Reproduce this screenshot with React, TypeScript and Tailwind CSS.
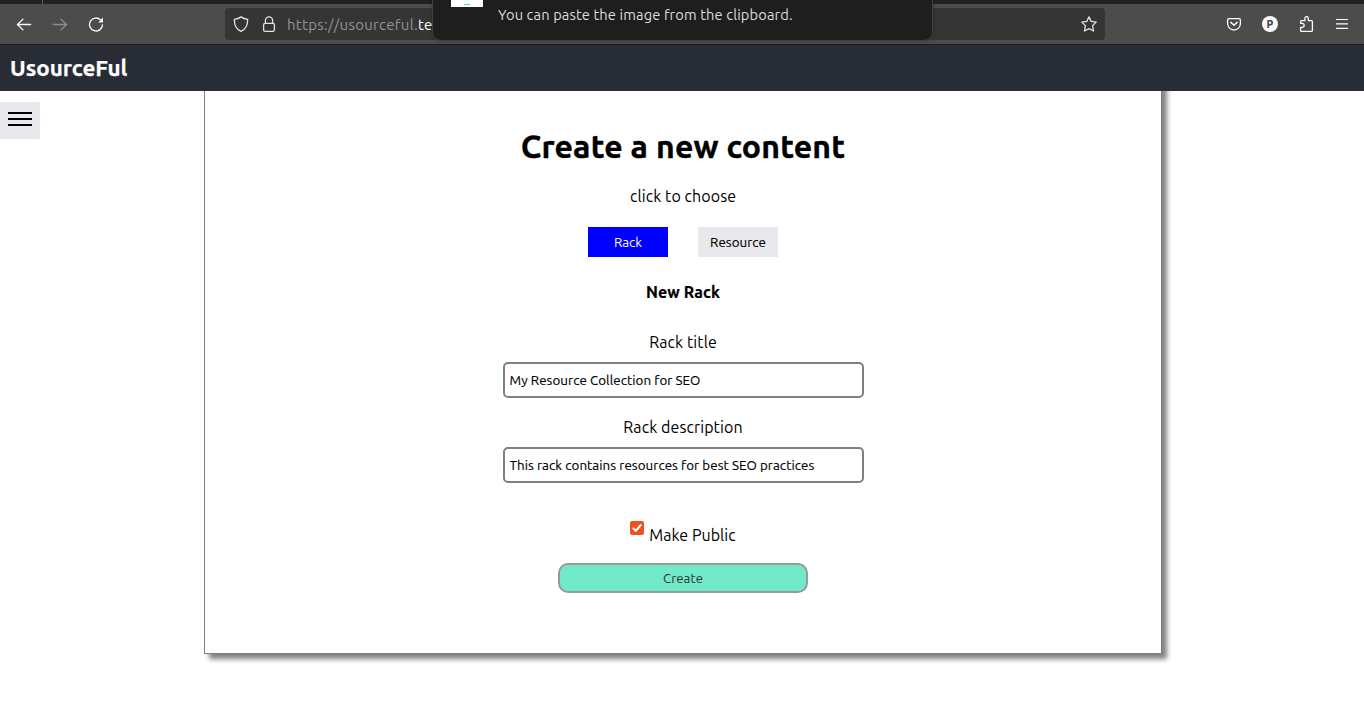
import { useState } from "react";

function BackIcon() {
  return (
    <svg width="16" height="16" viewBox="0 0 16 16" fill="none" stroke="currentColor" strokeWidth="1.3" strokeLinecap="round" strokeLinejoin="round">
      <path d="M14.6 8.5H1.6M7 3.1L1.4 8.5L7 13.9" />
    </svg>
  );
}

function ForwardIcon() {
  return (
    <svg width="16" height="16" viewBox="0 0 16 16" fill="none" stroke="currentColor" strokeWidth="1.3" strokeLinecap="round" strokeLinejoin="round">
      <path d="M1.4 8.5H14.4M9 3.1L14.6 8.5L9 13.9" />
    </svg>
  );
}

function ReloadIcon() {
  return (
    <svg width="16" height="16" viewBox="0 0 16 16" fill="none" stroke="currentColor" strokeWidth="1.3" strokeLinecap="round">
      <path d="M12.6 3.9A6.5 6.5 0 1 0 14.5 8.9" />
      <path d="M15 1.6V6.4H10.2Z" fill="currentColor" stroke="none" />
    </svg>
  );
}

function ShieldIcon() {
  return (
    <svg width="16" height="16" viewBox="0 0 16 16" fill="none" stroke="currentColor" strokeWidth="1.3" strokeLinejoin="round">
      <path d="M8 0.9C10 2.3 12 3 14.6 3.4C14.9 9 12.6 13.2 8 15.3C3.4 13.2 1.1 9 1.4 3.4C4 3 6 2.3 8 0.9Z" />
    </svg>
  );
}

function LockIcon() {
  return (
    <svg width="16" height="16" viewBox="0 0 16 16" fill="none" stroke="currentColor" strokeWidth="1.3">
      <rect x="2.6" y="7.3" width="10.8" height="8" rx="1.6" />
      <path d="M4.4 7.3V4.4A3.6 3.6 0 0 1 11.6 4.4V7.3" />
    </svg>
  );
}

function StarIcon() {
  return (
    <svg width="16" height="16" viewBox="0 0 16 16" fill="none" stroke="currentColor" strokeWidth="1.3" strokeLinejoin="round">
      <path d="M8 0.9L10.2 5.4L15.2 6.1L11.6 9.6L12.5 15L8 12.6L3.5 15L4.4 9.6L0.8 6.1L5.8 5.4Z" />
    </svg>
  );
}

function PocketIcon() {
  return (
    <svg width="16" height="16" viewBox="0 0 16 16" fill="none" stroke="currentColor" strokeWidth="1.3" strokeLinecap="round" strokeLinejoin="round">
      <path d="M3 2.7H13A1.5 1.5 0 0 1 14.4 4.2V7.6A6.4 6.4 0 0 1 1.6 7.6V4.2A1.5 1.5 0 0 1 3 2.7Z" />
      <path d="M4.9 6.4L8 9.2L11.1 6.4" strokeWidth="1.5" />
    </svg>
  );
}

function PuzzleIcon() {
  return (
    <svg width="16" height="16" viewBox="0 0 16 16" fill="none" stroke="currentColor" strokeWidth="1.3" strokeLinejoin="round">
      <path d="M2.6 7.3V5.6Q2.6 4.7 3.5 4.7H6.9V2.3A1.7 1.7 0 0 1 10.3 2.3V4.7H13.4Q14.4 4.7 14.4 5.6V14.4Q14.4 15.3 13.4 15.3H3.5Q2.6 15.3 2.6 14.4V11.4H4.1A2 2 0 0 0 4.1 7.3Z" />
    </svg>
  );
}

function ToolbarMenuIcon() {
  return (
    <svg width="14" height="16" viewBox="0 0 14 16" fill="none" stroke="currentColor" strokeWidth="1.2">
      <path d="M1 3.5H13M1 7.9H13M1 12.3H13" />
    </svg>
  );
}

function BrowserToolbar() {
  return (
    <div className="relative h-[45px] bg-[#4c4c4c]">
      <div className="h-1 bg-[#222222] pl-[42px]">
        <div className="h-1 w-px bg-[#5a5a5a]" />
      </div>
      <div className="flex h-10 items-center text-[#fbfbfe]">
        <div className="flex w-[225px] gap-5 pl-4">
          <BackIcon />
          <span className="text-[#8d8d8d]">
            <ForwardIcon />
          </span>
          <ReloadIcon />
        </div>
        <div className="flex h-8 w-[880px] items-center rounded bg-[#353535] pr-2 pl-2 text-[#e3e3e5]">
          <ShieldIcon />
          <span className="ml-3">
            <LockIcon />
          </span>
          <span className="ml-[10px] flex-1 pt-px text-[15px] leading-5 tracking-[0.28px] whitespace-nowrap text-[#939395]">
            https://usourceful.<span className="text-[#fbfbfe]">te</span>
          </span>
          <StarIcon />
        </div>
        <div className="flex flex-1 items-center justify-end gap-5 pr-[15px]">
          <PocketIcon />
          <span className="flex size-4 items-center justify-center rounded-full bg-[#fbfbfe] font-['Inter',sans-serif] text-[10px] leading-none font-extrabold text-[#4c4c4c]">
            P
          </span>
          <span className="mr-px">
            <PuzzleIcon />
          </span>
          <ToolbarMenuIcon />
        </div>
      </div>
      <div className="h-px bg-[#1b1b1c]" />
      <div className="absolute top-[-10px] left-[432px] h-[51px] w-[501px] rounded-[9px] border border-[#3f3f3f] bg-[#1e1e1e] shadow-[0_0_4px_rgba(0,0,0,0.25)]">
        <div className="flex items-start">
          <div className="ml-[18px] flex h-4 w-8 items-end justify-center bg-white pb-[2px]">
            <div className="h-px w-1.5 bg-[#3fdcb4]" />
          </div>
          <p className="mt-[14px] ml-[15px] text-[14.667px] leading-5 tracking-[0.12px] whitespace-nowrap text-[#dcdcdc]">
            You can paste the image from the clipboard.
          </p>
        </div>
      </div>
    </div>
  );
}

function TextField({ label, initial }: { label: string; initial: string }) {
  const [value, setValue] = useState(initial);
  return (
    <label className="flex flex-col items-center">
      <span className="text-base leading-5 tracking-[0.09px]">{label}</span>
      <input
        className="mt-2.5 h-9 w-[361px] rounded-[5px] border-2 border-[#808080] bg-white px-[5px] text-[13.333px] tracking-[0.08px] outline-none [-webkit-text-stroke:0.15px_black]"
        value={value}
        onChange={(e) => setValue(e.target.value)}
      />
    </label>
  );
}

export default function App() {
  const [isPublic, setPublic] = useState(true);
  return (
    <div className="h-[701px] overflow-hidden bg-white font-['Ubuntu','Noto_Sans',sans-serif] text-black">
      <BrowserToolbar />
      <header className="relative z-10 flex h-[46px] items-center bg-[#282c34] pl-[10px] text-[22.4px] font-bold text-white [-webkit-text-stroke:0.25px_white]">
        UsourceFul
      </header>
      <div className="flex items-start">
        <div className="w-[204px] pt-[11px]">
          <button className="flex h-[37px] w-10 flex-col items-center gap-1 bg-[#e9e9ed] pt-[10px]">
            <span className="h-0.5 w-6 bg-black" />
            <span className="h-0.5 w-6 bg-black" />
            <span className="h-0.5 w-6 bg-black" />
          </button>
        </div>
        <main className="-mt-5 flex h-[583px] w-[958px] flex-col items-center border border-[#808080] bg-white pt-[54px] shadow-[5px_5px_5px_gray]">
          <h1 className="text-[32px] leading-10 font-bold tracking-[0.2px] [-webkit-text-stroke:0.4px_black]">Create a new content</h1>
          <p className="mt-5 text-base leading-5 tracking-[0.07px]">click to choose</p>
          <div className="mt-[21px] flex gap-[30px] text-[13.333px]">
            <button className="h-[30px] w-20 bg-[#0000ff] pt-0.5 text-white">Rack</button>
            <button className="h-[30px] w-20 bg-[#e9e9ed] pt-0.5 tracking-[0.05px] [-webkit-text-stroke:0.15px_black]">Resource</button>
          </div>
          <h2 className="mt-[25px] text-base leading-5 font-bold tracking-[0.1px] [-webkit-text-stroke:0.2px_black]">New Rack</h2>
          <div className="mt-[30px] flex flex-col gap-[19px]">
            <TextField label="Rack title" initial="My Resource Collection for SEO" />
            <TextField label="Rack description" initial="This rack contains resources for best SEO practices" />
          </div>
          <label className="mt-[38px] flex h-[26px] items-start gap-[5px]">
            <input type="checkbox" className="sr-only" checked={isPublic} onChange={(e) => setPublic(e.target.checked)} />
            <span className="flex size-3.5 items-center justify-center rounded-[2px] bg-[#e95420]">
              {isPublic && (
                <svg width="14" height="14" viewBox="0 0 14 14" fill="none" stroke="white" strokeWidth="2" strokeLinecap="round" strokeLinejoin="round">
                  <path d="M3.3 7.4L5.8 9.9L10.8 4" />
                </svg>
              )}
            </span>
            <span className="mt-1 text-base leading-5 tracking-[0.05px]">Make Public</span>
          </label>
          <button className="mt-4 h-[30px] w-[250px] rounded-[10px] border-2 border-[#999999] bg-[#70eac8] pt-0.5 text-[13.333px] text-[#333333]">
            Create
          </button>
        </main>
      </div>
    </div>
  );
}
